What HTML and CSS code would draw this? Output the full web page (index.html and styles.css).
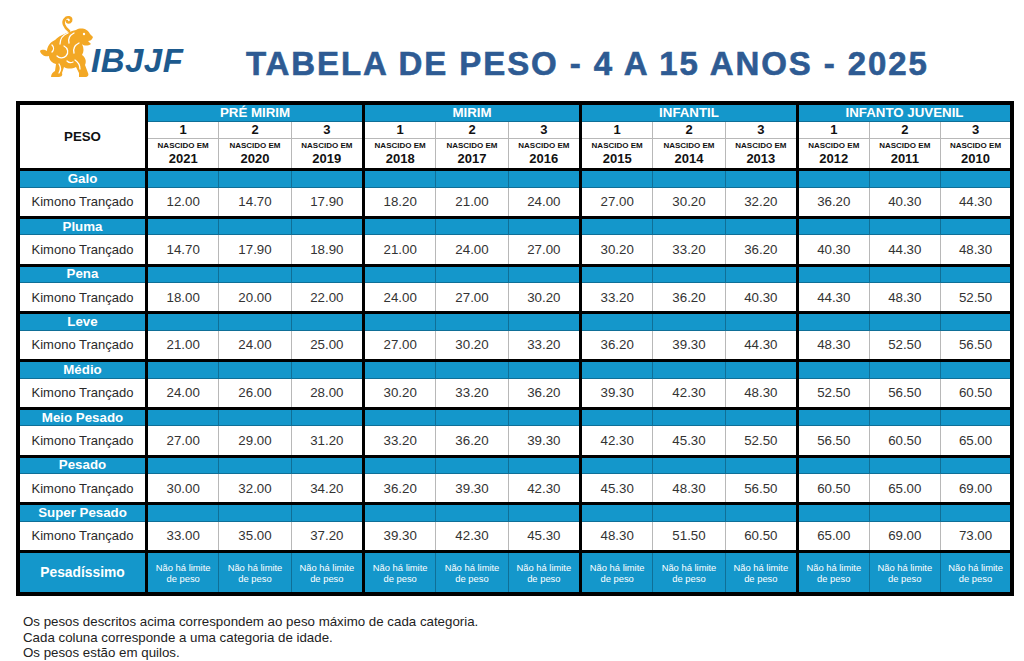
FILE: index.html
```html
<!DOCTYPE html>
<html lang="pt-BR">
<head>
<meta charset="utf-8">
<title>Tabela de Peso - 4 a 15 anos - 2025</title>
<link rel="stylesheet" href="styles.css">
</head>
<body>
<header class="top">
  <div class="logo">
    <svg class="lion" viewBox="0 0 56 64" width="56" height="64" aria-hidden="true">
      <path d="M31 16 C26 12 24 7 27 4 C29 1 34 2 33 6 C32 8 29 8 29 6" fill="none" stroke="#f3a825" stroke-width="2.6" stroke-linecap="round"/>
      <path d="M38 15 C43 12 50 14 52 19 L55 22 C54 25 52 26 50 26 L53 29 C50 31 46 31 44 29 C46 33 46 37 44 40 C47 42 49 46 47 50 L50 58 C51 60 50 62 47 62 L41 62 L41 58 L38 52 C34 54 29 54 26 52 L24 58 C25 61 23 62 20 62 L13 62 C13 59 15 57 17 56 L18 49 C14 48 11 45 11 41 C7 42 3 40 2 36 C4 34 7 35 9 36 C9 32 12 27 17 25 C22 20 30 17 38 15 Z" fill="#f3a825"/>
      <path d="M36 18 C32 20 30 24 31 28 M30 18 C25 20 22 24 22 29 M41 28 C37 30 35 34 36 38 M26 31 C30 33 31 38 28 41 C25 44 21 43 19 41 M14 30 C16 32 16 35 14 37 M37 45 C40 47 42 50 42 54 M21 49 C23 52 23 55 21 58 M29 46 C31 48 33 48 35 47" fill="none" stroke="#fff" stroke-width="1.3" stroke-linecap="round"/>
      <circle cx="46" cy="19" r="1.2" fill="#fff"/>
    </svg>
    <span class="brand">IBJJF</span>
  </div>
  <h1 class="title">TABELA DE PESO - 4 A 15 ANOS - 2025</h1>
</header>

<table class="weights">
  <colgroup class="c-label"><col class="w-label"></colgroup>
  <colgroup class="c-group"><col class="w-sub"><col class="w-sub"><col class="w-sub"></colgroup>
  <colgroup class="c-group"><col class="w-sub"><col class="w-sub"><col class="w-sub"></colgroup>
  <colgroup class="c-group"><col class="w-sub"><col class="w-sub"><col class="w-sub"></colgroup>
  <colgroup class="c-group"><col class="w-sub4"><col class="w-sub4"><col class="w-sub4"></colgroup>
  <thead>
    <tr class="grp">
      <th class="peso" rowspan="3">PESO</th>
      <th class="b" colspan="3">PRÉ MIRIM</th>
      <th class="b" colspan="3">MIRIM</th>
      <th class="b" colspan="3">INFANTIL</th>
      <th class="b" colspan="3">INFANTO JUVENIL</th>
    </tr>
    <tr class="num">
      <th>1</th><th>2</th><th>3</th>
      <th>1</th><th>2</th><th>3</th>
      <th>1</th><th>2</th><th>3</th>
      <th>1</th><th>2</th><th>3</th>
    </tr>
    <tr class="born">
      <th><small>NASCIDO EM</small>2021</th><th><small>NASCIDO EM</small>2020</th><th><small>NASCIDO EM</small>2019</th>
      <th><small>NASCIDO EM</small>2018</th><th><small>NASCIDO EM</small>2017</th><th><small>NASCIDO EM</small>2016</th>
      <th><small>NASCIDO EM</small>2015</th><th><small>NASCIDO EM</small>2014</th><th><small>NASCIDO EM</small>2013</th>
      <th><small>NASCIDO EM</small>2012</th><th><small>NASCIDO EM</small>2011</th><th><small>NASCIDO EM</small>2010</th>
    </tr>
  </thead>
  <tbody>
    <tr class="cat"><th class="b">Galo</th><td class="b"></td><td class="b"></td><td class="b"></td><td class="b"></td><td class="b"></td><td class="b"></td><td class="b"></td><td class="b"></td><td class="b"></td><td class="b"></td><td class="b"></td><td class="b"></td></tr>
    <tr class="val"><th>Kimono Trançado</th><td>12.00</td><td>14.70</td><td>17.90</td><td>18.20</td><td>21.00</td><td>24.00</td><td>27.00</td><td>30.20</td><td>32.20</td><td>36.20</td><td>40.30</td><td>44.30</td></tr>

    <tr class="cat"><th class="b">Pluma</th><td class="b"></td><td class="b"></td><td class="b"></td><td class="b"></td><td class="b"></td><td class="b"></td><td class="b"></td><td class="b"></td><td class="b"></td><td class="b"></td><td class="b"></td><td class="b"></td></tr>
    <tr class="val"><th>Kimono Trançado</th><td>14.70</td><td>17.90</td><td>18.90</td><td>21.00</td><td>24.00</td><td>27.00</td><td>30.20</td><td>33.20</td><td>36.20</td><td>40.30</td><td>44.30</td><td>48.30</td></tr>

    <tr class="cat"><th class="b">Pena</th><td class="b"></td><td class="b"></td><td class="b"></td><td class="b"></td><td class="b"></td><td class="b"></td><td class="b"></td><td class="b"></td><td class="b"></td><td class="b"></td><td class="b"></td><td class="b"></td></tr>
    <tr class="val"><th>Kimono Trançado</th><td>18.00</td><td>20.00</td><td>22.00</td><td>24.00</td><td>27.00</td><td>30.20</td><td>33.20</td><td>36.20</td><td>40.30</td><td>44.30</td><td>48.30</td><td>52.50</td></tr>

    <tr class="cat"><th class="b">Leve</th><td class="b"></td><td class="b"></td><td class="b"></td><td class="b"></td><td class="b"></td><td class="b"></td><td class="b"></td><td class="b"></td><td class="b"></td><td class="b"></td><td class="b"></td><td class="b"></td></tr>
    <tr class="val"><th>Kimono Trançado</th><td>21.00</td><td>24.00</td><td>25.00</td><td>27.00</td><td>30.20</td><td>33.20</td><td>36.20</td><td>39.30</td><td>44.30</td><td>48.30</td><td>52.50</td><td>56.50</td></tr>

    <tr class="cat"><th class="b">Médio</th><td class="b"></td><td class="b"></td><td class="b"></td><td class="b"></td><td class="b"></td><td class="b"></td><td class="b"></td><td class="b"></td><td class="b"></td><td class="b"></td><td class="b"></td><td class="b"></td></tr>
    <tr class="val"><th>Kimono Trançado</th><td>24.00</td><td>26.00</td><td>28.00</td><td>30.20</td><td>33.20</td><td>36.20</td><td>39.30</td><td>42.30</td><td>48.30</td><td>52.50</td><td>56.50</td><td>60.50</td></tr>

    <tr class="cat"><th class="b">Meio Pesado</th><td class="b"></td><td class="b"></td><td class="b"></td><td class="b"></td><td class="b"></td><td class="b"></td><td class="b"></td><td class="b"></td><td class="b"></td><td class="b"></td><td class="b"></td><td class="b"></td></tr>
    <tr class="val"><th>Kimono Trançado</th><td>27.00</td><td>29.00</td><td>31.20</td><td>33.20</td><td>36.20</td><td>39.30</td><td>42.30</td><td>45.30</td><td>52.50</td><td>56.50</td><td>60.50</td><td>65.00</td></tr>

    <tr class="cat"><th class="b">Pesado</th><td class="b"></td><td class="b"></td><td class="b"></td><td class="b"></td><td class="b"></td><td class="b"></td><td class="b"></td><td class="b"></td><td class="b"></td><td class="b"></td><td class="b"></td><td class="b"></td></tr>
    <tr class="val"><th>Kimono Trançado</th><td>30.00</td><td>32.00</td><td>34.20</td><td>36.20</td><td>39.30</td><td>42.30</td><td>45.30</td><td>48.30</td><td>56.50</td><td>60.50</td><td>65.00</td><td>69.00</td></tr>

    <tr class="cat"><th class="b">Super Pesado</th><td class="b"></td><td class="b"></td><td class="b"></td><td class="b"></td><td class="b"></td><td class="b"></td><td class="b"></td><td class="b"></td><td class="b"></td><td class="b"></td><td class="b"></td><td class="b"></td></tr>
    <tr class="val"><th>Kimono Trançado</th><td>33.00</td><td>35.00</td><td>37.20</td><td>39.30</td><td>42.30</td><td>45.30</td><td>48.30</td><td>51.50</td><td>60.50</td><td>65.00</td><td>69.00</td><td>73.00</td></tr>

    <tr class="heavy">
      <th class="b">Pesadíssimo</th>
      <td class="b">Não há limite<br>de peso</td><td class="b">Não há limite<br>de peso</td><td class="b">Não há limite<br>de peso</td>
      <td class="b">Não há limite<br>de peso</td><td class="b">Não há limite<br>de peso</td><td class="b">Não há limite<br>de peso</td>
      <td class="b">Não há limite<br>de peso</td><td class="b">Não há limite<br>de peso</td><td class="b">Não há limite<br>de peso</td>
      <td class="b">Não há limite<br>de peso</td><td class="b">Não há limite<br>de peso</td><td class="b">Não há limite<br>de peso</td>
    </tr>
  </tbody>
</table>

<footer class="notes">
  <p>Os pesos descritos acima correspondem ao peso máximo de cada categoria.</p>
  <p>Cada coluna corresponde a uma categoria de idade.</p>
  <p>Os pesos estão em quilos.</p>
</footer>
</body>
</html>
```
FILE: styles.css
```css
html, body {
  margin: 0;
  padding: 0;
  background: #fff;
}

body {
  font-family: "Liberation Sans", Arial, sans-serif;
  color: #222;
  width: 1024px;
  height: 661px;
  overflow: hidden;
}

.top {
  display: flex;
  align-items: flex-start;
  height: 101px;
  padding-left: 38px;
  box-sizing: border-box;
}

.logo {
  display: flex;
  align-items: flex-start;
  width: 150px;
  padding-top: 15px;
}

.lion {
  display: block;
  flex: none;
}

.brand {
  font-weight: bold;
  font-style: italic;
  font-size: 33px;
  line-height: 33px;
  color: #1d5a8e;
  letter-spacing: 0.5px;
  margin-top: 29px;
  margin-left: -3px;
}

.title {
  margin: 44px 0 0 58px;
  font-size: 33px;
  line-height: 40px;
  font-weight: bold;
  color: #2e5b93;
  letter-spacing: 1.9px;
  -webkit-text-stroke: 0.6px #2e5b93;
  white-space: nowrap;
}

/* ---------- table ---------- */
.weights {
  margin-left: 16px;
  width: 998px;
  table-layout: fixed;
  border-collapse: collapse;
  border: 4px solid #000;
}

.c-label, .c-group {
  border-left: 3px solid #000;
  border-right: 3px solid #000;
}

.w-label { width: 128.5px; }
.w-sub { width: 72.33px; }
.w-sub4 { width: 71.5px; }

.weights th,
.weights td {
  padding: 0;
  text-align: center;
  vertical-align: middle;
  border: 1px solid #b8b8b8;
  background: #fff;
  overflow: hidden;
  white-space: nowrap;
}

.weights .b {
  background: #1497cb;
  color: #fff;
  border-color: #0f6f97;
}

.grp { height: 18px; }
.grp th {
  font-size: 13.3px;
  line-height: 14px;
  font-weight: bold;
}

.peso {
  font-size: 13.5px;
  font-weight: bold;
  color: #111;
}

.num { height: 17px; }
.num th {
  font-size: 13px;
  line-height: 14px;
  font-weight: bold;
  color: #111;
}

.born { height: 31.5px; }
.born th {
  font-size: 13px;
  line-height: 15px;
  font-weight: bold;
  color: #111;
}
.born small {
  display: block;
  font-size: 8px;
  line-height: 10px;
  font-weight: bold;
}

.cat {
  height: 17.5px;
  border-top: 3px solid #000;
}
.cat th {
  font-size: 13.3px;
  line-height: 14px;
  font-weight: bold;
}

.val { height: 30.25px; }
.val th,
.val td {
  font-size: 13px;
  font-weight: normal;
  color: #2a2a2a;
}
.val td { color: #333; font-size: 13.3px; }

.heavy {
  height: 42.5px;
  border-top: 3px solid #000;
}
.heavy th {
  font-size: 13.8px;
  font-weight: bold;
}
.heavy td {
  font-size: 9.4px;
  line-height: 11px;
}

/* ---------- notes ---------- */
.notes {
  margin-top: 18px;
  padding-left: 23px;
  font-size: 13.3px;
  line-height: 15.5px;
  color: #222;
}
.notes p {
  margin: 0;
}
```
